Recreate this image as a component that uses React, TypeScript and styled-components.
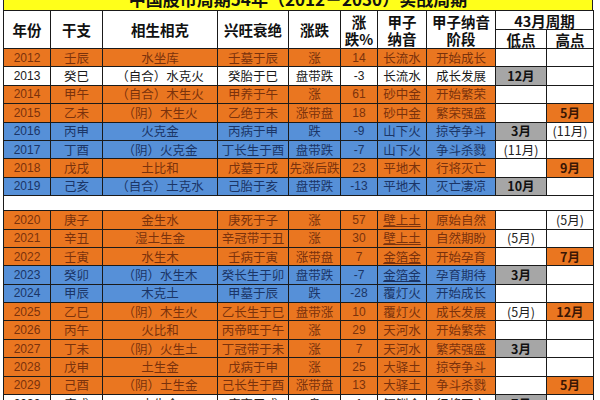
import React from "react";
import styled, { createGlobalStyle } from "styled-components";

const GlobalStyle = createGlobalStyle`
  html, body {
    margin: 0;
    padding: 0;
    background: #fff;
  }
  body {
    width: 600px;
    height: 400px;
    overflow: hidden;
    font-family: "Noto Sans CJK SC", "Liberation Sans", sans-serif;
  }
`;

type Tone = "o" | "b" | "w";

const BG: Record<Tone, string> = { o: "#ea7620", b: "#5690d8", w: "#ffffff" };
const FG: Record<Tone, string> = { o: "#7a320c", b: "#1b3566", w: "#1a1a1a" };

const Page = styled.div`
  padding-left: 3px;
  width: 597px;
`;

const Title = styled.div`
  width: 590px;
  height: 10px;
  box-sizing: border-box;
  background: #ffff1a;
  border-left: 1px solid #222;
  border-right: 1px solid #222;
  overflow: hidden;
  text-align: center;
  font-weight: 700;
  font-size: 17px;
  color: #111;
`;

const TitleText = styled.div`
  margin-top: -10px;
  line-height: 18px;
  white-space: nowrap;
`;

const Table = styled.table`
  border-collapse: collapse;
  table-layout: fixed;
  width: 590px;
`;

const HeadCell = styled.th<{ $h?: number }>`
  border: 1px solid #1a1a1a;
  padding: 0;
  height: ${(p) => p.$h ?? 18}px;
  background: #fff;
  color: #111;
  font-size: 14.5px;
  font-weight: 700;
  line-height: 17px;
  text-align: center;
  white-space: pre-line;
`;

const Row = styled.tr`
  height: 18.4px;
`;

const Cell = styled.td<{
  $bg: string;
  $fg: string;
  $num?: boolean;
  $bold?: boolean;
  $ul?: boolean;
}>`
  border: 1px solid #1a1a1a;
  padding: 0;
  background: ${(p) => p.$bg};
  color: ${(p) => p.$fg};
  font-family: ${(p) =>
    p.$num
      ? `"Liberation Sans", "Noto Sans CJK SC", sans-serif`
      : `"Noto Sans CJK SC", sans-serif`};
  font-size: ${(p) => (p.$num ? "12px" : "12.5px")};
  font-weight: ${(p) => (p.$bold ? 700 : 400)};
  text-decoration: ${(p) => (p.$ul ? "underline" : "none")};
  line-height: 16px;
  text-align: center;
  white-space: nowrap;
  overflow: hidden;
`;

const BlankCell = styled.td`
  border: 1px solid #1a1a1a;
  height: 12px;
  background: #fff;
`;

type Mark = { text: string; kind: "gray" | "white" | "orange" };

type YearRow = {
  year: string;
  gz: string;
  xs: string;
  xw: string;
  zd: string;
  pct: string;
  ny: string;
  stage: string;
  tone: Tone;
  ul?: boolean;
  low?: Mark;
  high?: Mark;
};

const first: YearRow[] = [
  { year: "2012", gz: "壬辰", xs: "水坐库", xw: "壬墓于辰", zd: "涨", pct: "14", ny: "长流水", stage: "开始成长", tone: "o" },
  { year: "2013", gz: "癸巳", xs: "（自合）水克火", xw: "癸胎于巳", zd: "盘带跌", pct: "-3", ny: "长流水", stage: "成长发展", tone: "w", low: { text: "12月", kind: "gray" } },
  { year: "2014", gz: "甲午", xs: "（自合）木生火", xw: "甲养于午", zd: "涨", pct: "61", ny: "砂中金", stage: "开始繁荣", tone: "o" },
  { year: "2015", gz: "乙未", xs: "（阴）木生火", xw: "乙绝于未", zd: "涨带盘", pct: "18", ny: "砂中金", stage: "繁荣强盛", tone: "o", high: { text: "5月", kind: "orange" } },
  { year: "2016", gz: "丙申", xs: "火克金", xw: "丙病于申", zd: "跌", pct: "-9", ny: "山下火", stage: "掠夺争斗", tone: "b", low: { text: "3月", kind: "gray" }, high: { text: "(11月)", kind: "white" } },
  { year: "2017", gz: "丁酉", xs: "（阴）火克金", xw: "丁长生于酉", zd: "盘带跌", pct: "-7", ny: "山下火", stage: "争斗杀戮", tone: "b", low: { text: "(11月)", kind: "white" } },
  { year: "2018", gz: "戊戌", xs: "土比和", xw: "戊墓于戌", zd: "先涨后跌", pct: "23", ny: "平地木", stage: "行将灭亡", tone: "o", high: { text: "9月", kind: "orange" } },
  { year: "2019", gz: "己亥", xs: "（自合）土克水", xw: "己胎于亥", zd: "盘带跌", pct: "-13", ny: "平地木", stage: "灭亡凄凉", tone: "b", low: { text: "10月", kind: "gray" } },
];

const second: YearRow[] = [
  { year: "2020", gz: "庚子", xs: "金生水", xw: "庚死于子", zd: "涨", pct: "57", ny: "壁上土", stage: "原始自然", tone: "o", ul: true, high: { text: "(5月)", kind: "white" } },
  { year: "2021", gz: "辛丑", xs: "湿土生金", xw: "辛冠带于丑", zd: "涨", pct: "30", ny: "壁上土", stage: "自然期盼", tone: "o", ul: true, low: { text: "(5月)", kind: "white" } },
  { year: "2022", gz: "壬寅", xs: "水生木", xw: "壬病于寅", zd: "涨带盘", pct: "7", ny: "金箔金", stage: "开始孕育", tone: "o", ul: true, high: { text: "7月", kind: "orange" } },
  { year: "2023", gz: "癸卯", xs: "（阴）水生木", xw: "癸长生于卯", zd: "盘带跌", pct: "-7", ny: "金箔金", stage: "孕育期待", tone: "b", ul: true, low: { text: "3月", kind: "gray" } },
  { year: "2024", gz: "甲辰", xs: "木克土", xw: "甲墓于辰", zd: "跌", pct: "-28", ny: "覆灯火", stage: "开始成长", tone: "b" },
  { year: "2025", gz: "乙巳", xs: "（阴）木生火", xw: "乙长生于巳", zd: "盘带涨", pct: "10", ny: "覆灯火", stage: "成长发展", tone: "o", low: { text: "(5月)", kind: "white" }, high: { text: "12月", kind: "orange" } },
  { year: "2026", gz: "丙午", xs: "火比和", xw: "丙帝旺于午", zd: "涨", pct: "29", ny: "天河水", stage: "开始繁荣", tone: "o" },
  { year: "2027", gz: "丁未", xs: "（阴）火生土", xw: "丁冠带于未", zd: "涨", pct: "7", ny: "天河水", stage: "繁荣强盛", tone: "o", low: { text: "3月", kind: "gray" } },
  { year: "2028", gz: "戊申", xs: "土生金", xw: "戊病于申", zd: "涨", pct: "25", ny: "大驿土", stage: "掠夺争斗", tone: "o" },
  { year: "2029", gz: "己酉", xs: "（阴）土生金", xw: "己长生于酉", zd: "涨带盘", pct: "13", ny: "大驿土", stage: "争斗杀戮", tone: "o", high: { text: "5月", kind: "orange" } },
  { year: "2030", gz: "庚戌", xs: "土生金", xw: "庚衰于戌", zd: "盘", pct: "1", ny: "钗钏金", stage: "行将灭亡", tone: "w", low: { text: "7月", kind: "gray" } },
];

const widths = [47, 52, 115, 71, 52, 37, 49, 69, 51, 47];

const MarkCell = ({ mark }: { mark?: Mark }) => {
  if (!mark) return <Cell $bg="#fff" $fg="#111" />;
  if (mark.kind === "gray")
    return (
      <Cell $bg="#a6a6a6" $fg="#111" $bold>
        {mark.text}
      </Cell>
    );
  if (mark.kind === "orange")
    return (
      <Cell $bg={BG.o} $fg="#3a1604" $bold>
        {mark.text}
      </Cell>
    );
  return (
    <Cell $bg="#fff" $fg="#222">
      {mark.text}
    </Cell>
  );
};

const DataRow = ({ r }: { r: YearRow }) => {
  const bg = BG[r.tone];
  const fg = FG[r.tone];
  return (
    <Row>
      <Cell $bg={bg} $fg={fg} $num>
        {r.year}
      </Cell>
      <Cell $bg={bg} $fg={fg}>
        {r.gz}
      </Cell>
      <Cell $bg={bg} $fg={fg}>
        {r.xs}
      </Cell>
      <Cell $bg={bg} $fg={fg}>
        {r.xw}
      </Cell>
      <Cell $bg={bg} $fg={fg}>
        {r.zd}
      </Cell>
      <Cell $bg={bg} $fg={fg} $num>
        {r.pct}
      </Cell>
      <Cell $bg={bg} $fg={fg} $ul={r.ul}>
        {r.ny}
      </Cell>
      <Cell $bg={bg} $fg={fg}>
        {r.stage}
      </Cell>
      <MarkCell mark={r.low} />
      <MarkCell mark={r.high} />
    </Row>
  );
};

export default function App() {
  return (
    <Page>
      <GlobalStyle />
      <Title>
        <TitleText>中国股市周期54年（2012－2030）实战周期</TitleText>
      </Title>
      <Table>
        <colgroup>
          {widths.map((w, i) => (
            <col key={i} style={{ width: w }} />
          ))}
        </colgroup>
        <thead>
          <tr>
            <HeadCell rowSpan={2}>年份</HeadCell>
            <HeadCell rowSpan={2}>干支</HeadCell>
            <HeadCell rowSpan={2}>相生相克</HeadCell>
            <HeadCell rowSpan={2}>兴旺衰绝</HeadCell>
            <HeadCell rowSpan={2}>涨跌</HeadCell>
            <HeadCell rowSpan={2}>{"涨\n跌%"}</HeadCell>
            <HeadCell rowSpan={2}>{"甲子\n纳音"}</HeadCell>
            <HeadCell rowSpan={2}>{"甲子纳音\n阶段"}</HeadCell>
            <HeadCell colSpan={2} $h={18}>
              43月周期
            </HeadCell>
          </tr>
          <tr>
            <HeadCell $h={18}>低点</HeadCell>
            <HeadCell $h={18}>高点</HeadCell>
          </tr>
        </thead>
        <tbody>
          {first.map((r) => (
            <DataRow key={r.year} r={r} />
          ))}
          <tr>
            <BlankCell colSpan={10} />
          </tr>
          {second.map((r) => (
            <DataRow key={r.year} r={r} />
          ))}
        </tbody>
      </Table>
    </Page>
  );
}
